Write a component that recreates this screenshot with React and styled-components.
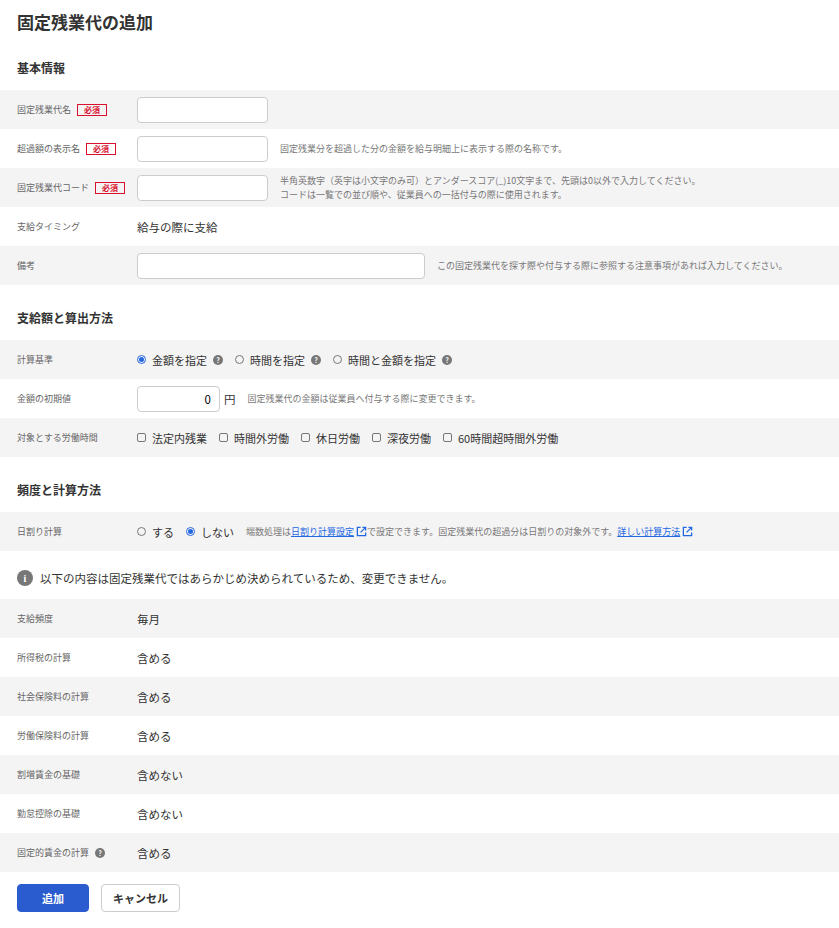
import React from "react";
import styled, { createGlobalStyle } from "styled-components";

const Global = createGlobalStyle`
  body { margin: 0; font-family: "Noto Sans CJK JP", "Noto Sans", sans-serif; color: #333; background: #fff; }
`;

const Page = styled.div`
  padding: 0 0 18px;
`;

const Title = styled.h1`
  margin: 0;
  padding: 10px 17px 0;
  font-size: 17px;
  font-weight: 700;
  line-height: 24px;
`;

const Heading = styled.h2`
  margin: 0;
  padding: ${(p) => p.$pad || "23px 17px 12px"};
  font-size: 12px;
  font-weight: 700;
  line-height: 20px;
`;

const Row = styled.div`
  display: flex;
  align-items: center;
  height: 39px;
  padding-left: 17px;
  background: ${(p) => (p.$grey ? "#f5f4f5" : "#fff")};
`;

const Label = styled.div`
  width: 120px;
  flex-shrink: 0;
  display: flex;
  align-items: center;
  gap: 6px;
  font-size: 9px;
  color: #666;
`;

const Required = styled.span`
  border: 1px solid #d9112f;
  color: #d9112f;
  font-size: 8px;
  font-weight: 700;
  line-height: 10px;
  padding: 0 6px;
`;

const Value = styled.div`
  display: flex;
  align-items: center;
  gap: 12px;
  font-size: 11.5px;
  color: #333;
`;

const Input = styled.input`
  width: ${(p) => p.$w || 131}px;
  height: 26px;
  box-sizing: border-box;
  border: 1px solid #ccc;
  border-radius: 4px;
  font: inherit;
  font-size: 11.5px;
  text-align: ${(p) => (p.$right ? "right" : "left")};
  padding: 0 8px;
  background: #fff;
`;

const Hint = styled.div`
  font-size: 9px;
  color: #777;
  line-height: 14px;
`;

const Option = styled.label`
  display: flex;
  align-items: center;
  gap: 6px;
  font-size: 11px;
  margin-right: 12px;
`;

const Radio = styled.span`
  width: 9px;
  height: 9px;
  box-sizing: border-box;
  border-radius: 50%;
  border: 1px solid ${(p) => (p.$on ? "#2367e1" : "#777")};
  display: inline-flex;
  align-items: center;
  justify-content: center;
  &::after {
    content: "";
    width: 5px;
    height: 5px;
    border-radius: 50%;
    background: ${(p) => (p.$on ? "#2367e1" : "transparent")};
  }
`;

const Check = styled.span`
  width: 9px;
  height: 9px;
  box-sizing: border-box;
  border: 1px solid #777;
  border-radius: 2px;
`;

const Help = styled.span`
  width: 10px;
  height: 10px;
  border-radius: 50%;
  background: #777;
  color: #fff;
  font-size: 7px;
  font-weight: 700;
  display: inline-flex;
  align-items: center;
  justify-content: center;
`;

const Link = styled.a`
  color: #2367e1;
  text-decoration: underline;
  display: inline-flex;
  align-items: center;
  gap: 2px;
`;

const Note = styled.div`
  display: flex;
  align-items: center;
  gap: 7px;
  padding: 19px 17px 13px;
  font-size: 11.5px;
`;

const InfoIcon = styled.span`
  width: 16px;
  height: 16px;
  border-radius: 50%;
  background: #777;
  color: #fff;
  font-size: 10px;
  font-weight: 700;
  font-family: "Liberation Serif", serif;
  display: inline-flex;
  align-items: center;
  justify-content: center;
`;

const Actions = styled.div`
  display: flex;
  gap: 12px;
  padding: 12px 17px 0;
`;

const Button = styled.button`
  height: 28px;
  padding: 0 ${(p) => (p.$primary ? 24 : 11)}px;
  border-radius: 4px;
  font: inherit;
  font-size: 11px;
  font-weight: 700;
  border: 1px solid ${(p) => (p.$primary ? "#2a5ccf" : "#ccc")};
  background: ${(p) => (p.$primary ? "#2a5ccf" : "#fff")};
  color: ${(p) => (p.$primary ? "#fff" : "#333")};
`;

const Ext = () => (
  <svg width="11" height="11" viewBox="0 0 12 12" fill="none" stroke="#2367e1" strokeWidth="1.4">
    <path d="M5 1.5H1.5v9h9V7" />
    <path d="M7 1.5h3.5V5M10.5 1.5 5 7" />
  </svg>
);

const fixed = [
  ["支給頻度", "毎月"],
  ["所得税の計算", "含める"],
  ["社会保険料の計算", "含める"],
  ["労働保険料の計算", "含める"],
  ["割増賃金の基礎", "含めない"],
  ["勤怠控除の基礎", "含めない"],
  ["固定的賃金の計算", "含める", true],
];

export default function App() {
  return (
    <Page>
      <Global />
      <Title>固定残業代の追加</Title>
      <Heading $pad="24px 17px 12px">基本情報</Heading>
      <Row $grey>
        <Label>固定残業代名<Required>必須</Required></Label>
        <Value><Input /></Value>
      </Row>
      <Row>
        <Label>超過額の表示名<Required>必須</Required></Label>
        <Value><Input /><Hint>固定残業分を超過した分の金額を給与明細上に表示する際の名称です。</Hint></Value>
      </Row>
      <Row $grey>
        <Label>固定残業代コード<Required>必須</Required></Label>
        <Value>
          <Input />
          <Hint>
            半角英数字（英字は小文字のみ可）とアンダースコア(_)10文字まで、先頭は0以外で入力してください。
            <br />
            コードは一覧での並び順や、従業員への一括付与の際に使用されます。
          </Hint>
        </Value>
      </Row>
      <Row>
        <Label>支給タイミング</Label>
        <Value>給与の際に支給</Value>
      </Row>
      <Row $grey>
        <Label>備考</Label>
        <Value><Input $w={288} /><Hint>この固定残業代を探す際や付与する際に参照する注意事項があれば入力してください。</Hint></Value>
      </Row>

      <Heading>支給額と算出方法</Heading>
      <Row $grey>
        <Label>計算基準</Label>
        <Value style={{ gap: 0 }}>
          <Option><Radio $on />金額を指定<Help>?</Help></Option>
          <Option><Radio />時間を指定<Help>?</Help></Option>
          <Option><Radio />時間と金額を指定<Help>?</Help></Option>
        </Value>
      </Row>
      <Row>
        <Label>金額の初期値</Label>
        <Value style={{ gap: 4 }}>
          <Input $w={83} $right defaultValue="0" />
          <span>円</span>
          <Hint style={{ marginLeft: 8 }}>固定残業代の金額は従業員へ付与する際に変更できます。</Hint>
        </Value>
      </Row>
      <Row $grey>
        <Label>対象とする労働時間</Label>
        <Value style={{ gap: 0 }}>
          {["法定内残業", "時間外労働", "休日労働", "深夜労働", "60時間超時間外労働"].map((t) => (
            <Option key={t}><Check />{t}</Option>
          ))}
        </Value>
      </Row>

      <Heading>頻度と計算方法</Heading>
      <Row $grey>
        <Label>日割り計算</Label>
        <Value style={{ gap: 0 }}>
          <Option><Radio />する</Option>
          <Option><Radio $on />しない</Option>
          <Hint>
            端数処理は<Link>日割り計算設定<Ext /></Link>で設定できます。固定残業代の超過分は日割りの対象外です。<Link>詳しい計算方法<Ext /></Link>
          </Hint>
        </Value>
      </Row>
      <Note><InfoIcon>i</InfoIcon>以下の内容は固定残業代ではあらかじめ決められているため、変更できません。</Note>
      {fixed.map(([l, v, h], i) => (
        <Row key={l} $grey={i % 2 === 0}>
          <Label>{l}{h && <Help>?</Help>}</Label>
          <Value>{v}</Value>
        </Row>
      ))}
      <Actions>
        <Button $primary>追加</Button>
        <Button>キャンセル</Button>
      </Actions>
    </Page>
  );
}
